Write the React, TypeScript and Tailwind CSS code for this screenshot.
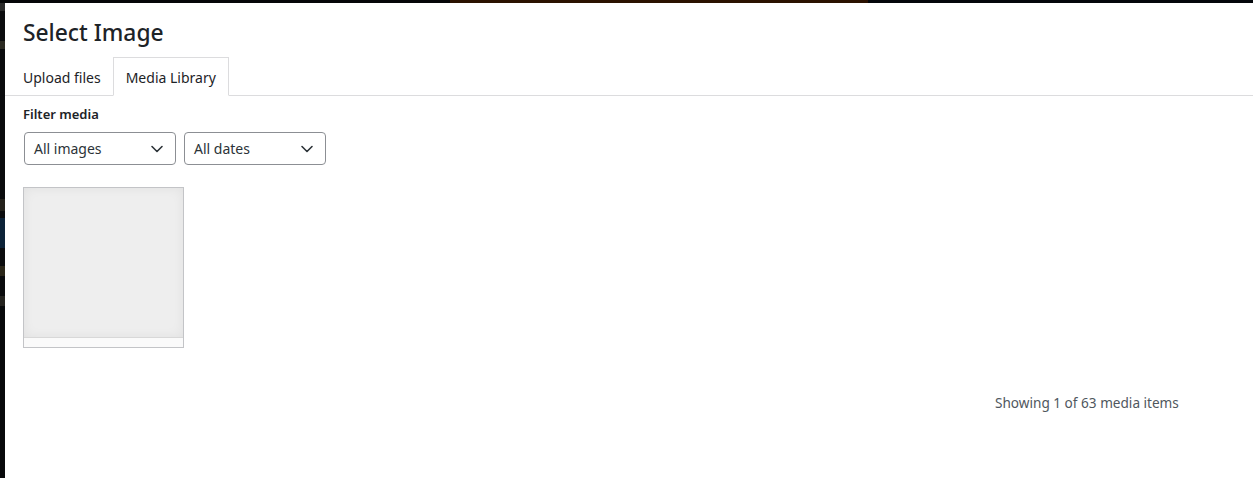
import React from "react";

const Chevron = () => (
  <svg width="20" height="20" viewBox="0 0 20 20" className="shrink-0">
    <path d="M5 7.5 L10 12.5 L15 7.5" fill="none" stroke="#2c3338" strokeWidth="1.6" strokeLinecap="round" strokeLinejoin="round" />
  </svg>
);

const Select = ({ label, w }: { label: string; w: string }) => (
  <div className={`flex items-center justify-between h-[33px] border border-[#8c8f94] rounded-[4px] pl-[9px] pr-[8px] text-[14px] text-[#2c3338] ${w}`}>
    <span>{label}</span>
    <Chevron />
  </div>
);

export default function App() {
  return (
    <div className="w-[1253px] h-[478px] bg-[#0a0b0d] flex flex-col overflow-hidden" style={{ fontFamily: '"Noto Sans", "Open Sans", sans-serif' }}>
      <div className="h-[3px] flex shrink-0">
        <div className="w-[450px] bg-[#050608]" />
        <div className="w-[418px] bg-[#2a1100]" />
        <div className="flex-1 bg-[#03060a]" />
      </div>
      <div className="flex flex-1">
        <div className="w-[5px] flex flex-col shrink-0">
          <div className="h-[8px] bg-[#2a2a2a]" />
          <div className="h-[30px] bg-[#0b0c0e]" />
          <div className="h-[8px] bg-[#2b2a22]" />
          <div className="h-[150px] bg-[#0a0b0d]" />
          <div className="h-[12px] bg-[#23211b]" />
          <div className="h-[7px] bg-[#0b0c0e]" />
          <div className="h-[30px] bg-[#0c2238]" />
          <div className="h-[18px] bg-[#0b0c0e]" />
          <div className="h-[10px] bg-[#2a2619]" />
          <div className="h-[20px] bg-[#0a0b0d]" />
          <div className="h-[10px] bg-[#24231f]" />
          <div className="flex-1 bg-[#08090b]" />
        </div>
        <div className="flex-1 bg-white flex flex-col">
          <h1 className="pl-[18px] pt-[15px] h-[54px] text-[22.8px] font-medium text-[#1d2327] leading-[30px]">Select Image</h1>
          <div className="flex pl-[4px] border-b border-[#dcdcde] h-[39px]">
            <div className="pl-[13px] pr-[11px] pt-[9px] text-[14px] text-[#1d2327] border border-transparent">Upload files</div>
            <div className="px-[12px] pt-[9px] text-[14px] text-[#1d2327] border border-[#dcdcde] border-b-white bg-white -mb-px">Media Library</div>
          </div>
          <div className="pl-[18px] pt-[9px] text-[13px] font-semibold text-[#1d2327] leading-[18px]">Filter media</div>
          <div className="flex gap-[8px] pl-[19px] mt-[9px]">
            <Select label="All images" w="w-[152px]" />
            <Select label="All dates" w="w-[142px]" />
          </div>
          <div className="pl-[18px] mt-[22px]">
            <div className="w-[161px] h-[161px] border border-[#c3c4c7] flex flex-col bg-[#f0f0f1]">
              <div className="flex-1 bg-[#eeeeee] shadow-[inset_0_0_12px_rgba(0,0,0,0.06)]" />
              <div className="h-[10px] border-t border-[#d8d8d8] bg-[#fafafa]" />
            </div>
          </div>
          <div className="flex pl-[990px] mt-[46px] text-[13.6px] text-[#50575e] leading-[18px]">Showing 1 of 63 media items</div>
        </div>
      </div>
    </div>
  );
}
